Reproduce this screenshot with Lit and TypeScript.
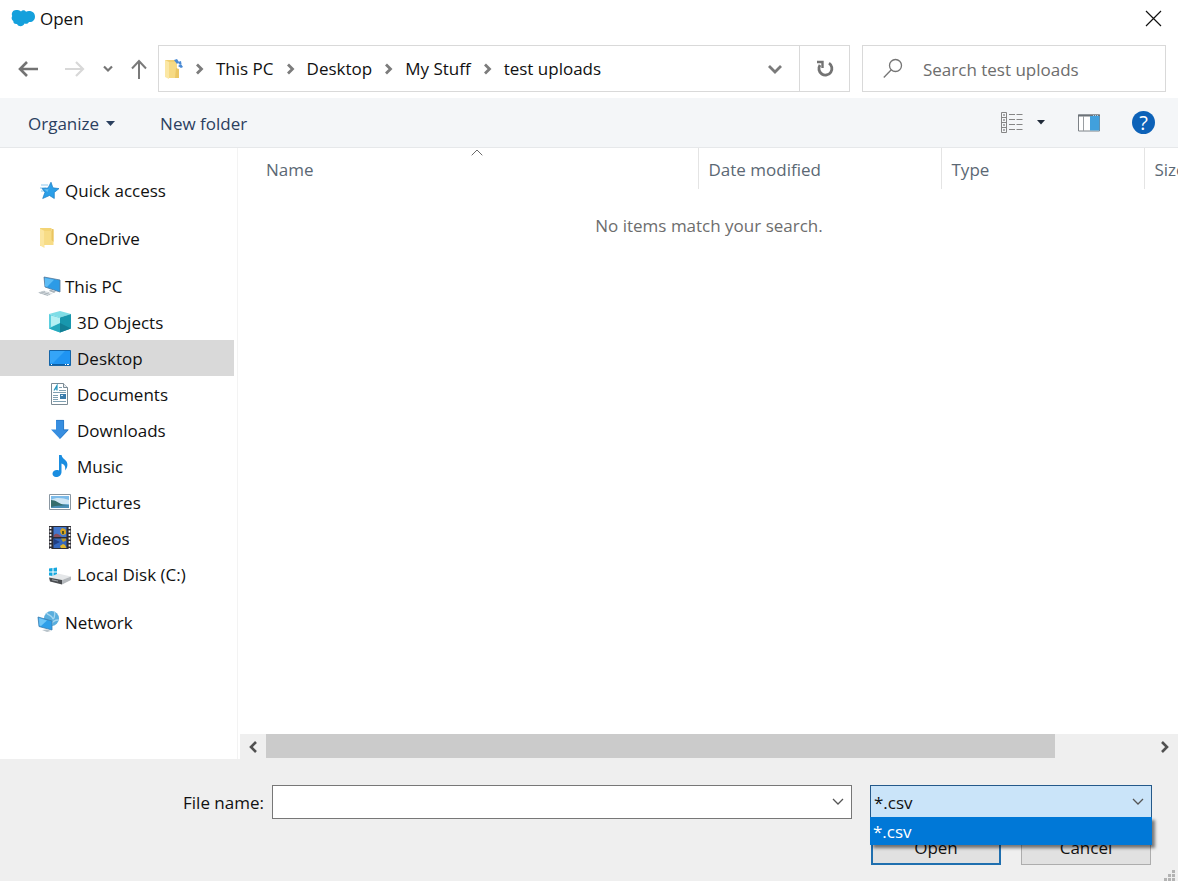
import { LitElement, html, svg, css } from "lit";
import { customElement, property, state } from "lit/decorators.js";
import { classMap } from "lit/directives/class-map.js";

const icons: Record<string, unknown> = {
  star: svg`<path d="M4 7h7M3 10h6M4 13h4" stroke="#8cc8ee" stroke-width="1"/>
    <path d="M14 4.200 15.900 9.800 22 10.600 17.300 14.400 17.300 20.500 12.500 17.500 5.700 20.500 8 14.200 5 10.500 11 10z" fill="#2b9fe8" stroke="#1b7cc4" stroke-width=".7"/>
    <path d="M13.800 6 12 11l-5 .2 3.500 2.800" fill="#62bdf2"/>`,
  folder: svg`<path d="M3 2h11.5v17H6l-3 1z" fill="#f3d475"/><path d="M3 2.5 7.5 5v17L3 19.5z" fill="#fbe6a0"/>
    <path d="M7.5 19V5H15l1.5-1.5V19z" fill="#f7dc86"/><path d="M14.5 3v11l2 2V3z" fill="#e9c460"/>`,
  pc: svg`<path d="M7 3 23 6v12L8 13z" fill="#2c9be6" stroke="#54789a" stroke-width=".8"/><path d="M8 4l9 1.7L10 13l-2-.7z" fill="#5cbcf5"/>
    <path d="M.5 18.5 7 16.500l9 3-5 2.500z" fill="#dfe4e7"/><path d="M2 18.500l9 3M4.500 17.700l8.500 2.900M3 19.200l5-1.800M7 20.500l5-1.800" stroke="#a3adb4" stroke-width=".7"/><path d="M13 15.500l6 2-2 1.500-5-2z" fill="#aab4bb"/>`,
  cube: svg`<path d="M11 1 22 4 11 7.5 0 4z" fill="#7fdde6"/><path d="M0 4l11 3.5v15L0 18.5z" fill="#5ccfdf"/>
    <path d="M11 7.5 22 4v14.500l-11 4z" fill="#1897ad"/><path d="M0 18.500 11 13v9.500z" fill="#27a9bd"/><path d="M2 5.500 11 8v5L2 17z" fill="#b6f0f3"/><path d="M11 13l11 5.500-11 4z" fill="#127f95"/>`,
  desktop: svg`<path d="M.5 4.500h21v15H.5z" fill="#1f94f2" stroke="#1565a8"/><path d="M1 5h15L4 17H1z" fill="#35a5f8"/>
    <path d="M1 18.500h20" stroke="#0d5ea3"/><path d="M2 18.500h1M16 18.500h1M18 18.500h2" stroke="#fff"/>`,
  doc: svg`<path d="M2.500 1.500h12l4 4v17h-16z" fill="#fff" stroke="#7b8a94"/><path d="M14.500 1.500v4h4" fill="#e8eef2" stroke="#7b8a94"/>
    <path d="M5 8.500 8 3.500V8.500M6 7h2" stroke="#2695bd" fill="none" stroke-width="1.200"/>
    <path d="M10 5.500h3M10 8.500h7M4 10.500h13M4 13.500h5M4 15.500h5M4 17.500h5M4 19.500h13" stroke="#7fa0b2"/><path d="M11 12h6v5h-6z" fill="#3a7cab"/><path d="M12 13h2v1h-2z" fill="#cfe6f5"/>`,
  down: svg`<path d="M7 2h8v9.500h5L11 21 2 11.500h5z" fill="#378ee0"/><path d="M7.400 2.400h7.200V12h4.400L11 20.400" fill="none" stroke="#2a77c4" stroke-width=".8"/>`,
  music: svg`<path d="M10 1h2.500c.5 3 3 4 5 6.500 1.500 2.500 1.300 6-1.500 9 .8-3.800-.2-6-3.500-7V18c0 3-2.500 5-5.500 5C5 23 3.500 21.500 3.500 19.700c0-2.200 2-3.700 4.300-3.700.9 0 1.600.1 2.200.5z" fill="#1a8de0"/>`,
  picture: svg`<path d="M.5 4.500h21v15H.5z" fill="#fff" stroke="#8a97a2"/><path d="M2 6h18v12H2z" fill="#7dbbe9"/><path d="M2 10c5-3 12-2 18 0v4H2z" fill="#cfe6f4"/>
    <path d="M2 10c5 0 7 3 12 4.500l6 .5v3H2z" fill="#356d6c"/><path d="M6 16l14-1v3H2v-1z" fill="#4b8fb6"/>`,
  video: svg`<path d="M0 0h22v23H0z" fill="#2c2c34"/><path d="M4.500 1h13v10h-13z" fill="#4377cc"/><path d="M4.500 12.500h13V22h-13z" fill="#3467be"/>
    <path d="M1.500 1v22M20.500 1v22" stroke="#f2f2f2" stroke-width="1.800" stroke-dasharray="2 1.500"/>
    <path d="M11 5l2-3 3 1 1 2v3l-3 1-2-1z" fill="#d9a51d"/><path d="M5 9c3-3 5 0 8 2H5z" fill="#8a4e5c"/><path d="M13 5h2v3h-2z" fill="#4d5221"/>
    <path d="M12 12.500h5v2l-3 1.500z" fill="#b99a28"/><path d="M11 20l3-2 2 1 1.500 3H12z" fill="#e0b52c"/><path d="M5 13l6 3-6 3z" fill="#203f84"/>`,
  disk: svg`<path d="M0 6.500 3.500 6v3.500H0zM4.500 6 8 5.500v4H4.500zM0 10.500h3.500V14L0 13.500zM4.500 10.500H8v4L4.500 14z" fill="#16a7de"/>
    <path d="M9 11.500 22 14.500 13 18 0 15.500z" fill="#e5e7e9"/><path d="M0 15.500 13 18v4.500L1 19.500z" fill="#4a4d51"/><path d="M13 18l9-3.500v3.500l-9 4.500z" fill="#b4b8bc"/><path d="M3 17.800l6 1.300" stroke="#9ea3a7"/>`,
  network: svg`<circle cx="14.500" cy="8.500" r="7.500" fill="#5aaedd"/><path d="M9.500 3c2 2.500 5 2 6 5s3-3 2-6M15 15c-1-3 3-5 6.500-5" fill="none" stroke="#a5d6ef" stroke-width="1.300"/>
    <path d="M1 7l14 4v9L2 16.500z" fill="#2f9fe9" stroke="#3e7eae" stroke-width=".8"/><path d="M2 8l8 2.500L4 16l-1.500-.5z" fill="#6fc6f7"/><path d="M5 20l5-.5 4 1.500-4 1z" fill="#b8c3ca"/>`,
};

interface Place {
  label: string;
  icon: string;
  children?: Place[];
}

const places: Place[] = [
  { label: "Quick access", icon: "star" },
  { label: "OneDrive", icon: "folder" },
  {
    label: "This PC",
    icon: "pc",
    children: [
      { label: "3D Objects", icon: "cube" },
      { label: "Desktop", icon: "desktop" },
      { label: "Documents", icon: "doc" },
      { label: "Downloads", icon: "down" },
      { label: "Music", icon: "music" },
      { label: "Pictures", icon: "picture" },
      { label: "Videos", icon: "video" },
      { label: "Local Disk (C:)", icon: "disk" },
    ],
  },
  { label: "Network", icon: "network" },
];

const base = css`
  * { box-sizing: border-box; }
  button, input, select { font: inherit; color: inherit; margin: 0; padding: 0; border: 0; background: none; border-radius: 0; }
  svg { display: block; flex: none; }
  ul, ol { list-style: none; margin: 0; padding: 0; }
`;

@customElement("nav-bar")
class NavBar extends LitElement {
  static styles = [base, css`
    :host { display: flex; align-items: center; padding: 8px 12px 6px 16px; }
    .history { display: flex; align-items: center; width: 142px; }
    .history button { display: grid; place-items: center; flex: none; width: 16px; height: 32px; }
    .history .back { width: 24px; margin-right: 22px; }
    .history .forward { width: 24px; margin-right: 14px; }
    .history .recent { margin-right: 15px; }
    .address { flex: 1; min-width: 0; display: flex; align-items: center; height: 47px; border: 1px solid #d9d9d9; }
    .folder { margin-left: 5px; }
    .crumbs { flex: 1; display: flex; align-items: center; min-width: 0; }
    .crumbs li { display: flex; align-items: center; white-space: nowrap; }
    .crumbs svg { margin: 0 12px; }
    a { color: #111; text-decoration: none; }
    .drop { width: 48px; height: 45px; display: grid; place-items: center; }
    .refresh { width: 50px; height: 45px; display: grid; place-items: center; border-left: 1px solid #d9d9d9; }
    .search { display: flex; align-items: center; width: 304px; height: 47px; margin-left: 12px; padding-left: 20px; border: 1px solid #d9d9d9; }
    .search input { flex: 1; min-width: 0; margin-left: 20px; padding-top: 2px; outline: 0; }
    .search input::placeholder { color: #6d6d6d; opacity: 1; }
  `];

  render() {
    return html`
      <div class="history">
        <button class="back" aria-label="Back"><svg width="24" height="20" viewBox="0 0 24 20" fill="none" stroke="#737373" stroke-width="2.600"><path d="M22 10H4M11 3 4 10l7 7"/></svg></button>
        <button class="forward" aria-label="Forward"><svg width="24" height="20" viewBox="0 0 24 20" fill="none" stroke="#d8d8d8" stroke-width="2.200"><path d="M3 10h18M14 3l7 7-7 7"/></svg></button>
        <button class="recent" aria-label="Recent locations"><svg width="12" height="8" viewBox="0 0 12 8" fill="none" stroke="#757575" stroke-width="2.200"><path d="M2 1.500 6 5.500l4-4"/></svg></button>
        <button aria-label="Up"><svg width="16" height="20" viewBox="0 0 16 20" fill="none" stroke="#7a7a7a" stroke-width="2"><path d="M8 20V2M1 9.500 8 2l7 7.500"/></svg></button>
      </div>
      <div class="address">
        <svg class="folder" width="19" height="24" viewBox="1 0 19 24"><path d="M2 3h12v18H4z" fill="#f0cf72"/><path d="M2 3l4 2v17l-4-2z" fill="#fbe7a4"/><path d="M6 5h8v16H6z" fill="#f6da84"/><path d="M13 11l3 1v9h-4z" fill="#ebc765"/><path d="M11 3l3-1 2 3-2 2zM15 5l3-1 .5 3-2.500.5zM15 9l3-2 2 3-2 1z" fill="#4a8ad4"/></svg>
        <ol class="crumbs">
          ${["This PC", "Desktop", "My Stuff", "test uploads"].map((c) => html`<li>
            <svg width="9" height="14" viewBox="0 0 9 14" fill="none" stroke="#7c7c7c" stroke-width="2.800"><path d="M2 2.500 6.500 7 2 11.500"/></svg><a href="#">${c}</a></li>`)}
        </ol>
        <button class="drop" aria-label="Previous locations"><svg width="16" height="10" viewBox="0 0 16 10" fill="none" stroke="#7a7a7a" stroke-width="2.800"><path d="M2 2l6 6 6-6"/></svg></button>
        <button class="refresh" aria-label="Refresh"><svg width="20" height="20" viewBox="0 0 20 20" fill="none" stroke="#737373" stroke-width="2.800"><path d="M14 4.200A6.500 6.500 0 1 1 5 6"/><path d="M2 3h5.500v6" stroke-width="2.400"/></svg></button>
      </div>
      <label class="search">
        <svg width="20" height="22" viewBox="0 0 20 22" fill="none" stroke="#757575" stroke-width="1.300"><circle cx="12.500" cy="7.500" r="6"/><path d="M8.300 11.800.8 19.500"/></svg>
        <input type="text" placeholder="Search test uploads" aria-label="Search test uploads">
      </label>`;
  }
}

@customElement("command-bar")
class CommandBar extends LitElement {
  static styles = [base, css`
    :host { display: flex; align-items: center; height: 50px; padding: 0 23px 0 28px; background: #f4f6f8; border-bottom: 1px solid #e6e8ea; color: #2b405f; }
    button { display: flex; align-items: center; height: 32px; }
    .text { padding-top: 2px; }
    .organize { gap: 7px; margin-right: 45px; }
    .spacer { flex: 1; }
    .views { gap: 14px; margin-right: 33px; }
    .pane { margin-right: 31px; }
    .help { justify-content: center; width: 23px; height: 23px; border-radius: 50%; background: #0d62b8; color: #fff; font-size: 20px; }
  `];

  render() {
    return html`
      <button class="text organize">Organize <svg width="9" height="5" viewBox="0 0 9 5"><path d="M0 0h9L4.500 5z" fill="#2b405f"/></svg></button>
      <button class="text">New folder</button>
      <div class="spacer"></div>
      <button class="views" aria-label="Change your view">
        <svg width="22" height="22" viewBox="0 0 22 22" fill="none" stroke="#858585"><path d="M.5.5h5v20h-5zM.5 5.500h5M.5 10.500h5M.5 15.500h5"/><path d="M2.500 3h1M2.500 8h1M2.500 13h1M2.500 18h1" stroke="#333" stroke-width="1.500"/><path d="M8 2.500h6M15.500 2.500h6M8 7.500h6M15.500 7.500h6M8 12.500h6M15.500 12.500h6M8 17.500h6M15.500 17.500h6"/></svg>
        <svg width="8" height="5" viewBox="0 0 8 5"><path d="M0 0h8L4 4.500z" fill="#1f2a38"/></svg>
      </button>
      <button class="pane" aria-label="Show the preview pane"><svg width="23" height="18" viewBox="0 0 23 18"><path d="M.5 1h21v16H.5z" fill="#fff" stroke="#7d8287"/><path d="M0 1.500h22" stroke="#6c7278" stroke-width="2"/><path d="M5.500 2v15" stroke="#9a9ea2"/><path d="M12 2h9.500v14.500H12z" fill="#41a0dd"/><path d="M15 1.500h6" stroke="#a7d3ef" stroke-dasharray="1 1"/></svg></button>
      <button class="help" aria-label="Help">?</button>`;
  }
}

@customElement("place-tree")
class PlaceTree extends LitElement {
  @state() private selected = "Desktop";

  static styles = [base, css`
    :host { display: block; padding: 24px 3px 24px 0; border-right: 1px solid #f3f3f3; }
    .roots { display: grid; gap: 12px; }
    button { display: flex; align-items: center; gap: 4px; width: 100%; height: 36px; padding-left: 37px; color: #111; white-space: nowrap; text-align: left; }
    .child { padding-left: 49px; }
    .selected { background: #d9d9d9; }
    .label { padding-top: 2px; }
  `];

  private item(p: Place, child: boolean) {
    return html`<button class=${classMap({ child, selected: p.label === this.selected })} @click=${() => (this.selected = p.label)}>
      <svg width="24" height="24" viewBox="0 0 24 24" aria-hidden="true">${icons[p.icon]}</svg><span class="label">${p.label}</span></button>`;
  }

  render() {
    return html`<ul class="roots">${places.map((p) => html`<li>${this.item(p, false)}
      ${p.children ? html`<ul>${p.children.map((c) => html`<li>${this.item(c, true)}</li>`)}</ul>` : ""}</li>`)}</ul>`;
  }
}

@customElement("file-list")
class FileList extends LitElement {
  static styles = [base, css`
    :host { display: flex; flex-direction: column; min-width: 0; overflow: hidden; padding-left: 2px; }
    .rows { flex: 1; }
    table { width: 100%; table-layout: fixed; border-collapse: collapse; }
    .date { width: 243px; }
    .type { width: 203px; }
    .size { width: 34px; }
    th { height: 41px; padding: 0 0 0 10px; font-weight: 400; text-align: left; color: #5b6874; border-right: 1px solid #e4e4e4; overflow: hidden; white-space: nowrap; vertical-align: top; }
    th:first-child { padding-left: 16px; }
    th:last-child { border-right: 0; }
    th button { display: grid; grid-template-rows: 10px 24px; width: 100%; text-align: left; line-height: 24px; }
    th svg { justify-self: center; margin-top: 1px; }
    .name { padding-left: 10px; }
    td { padding: 25px 0; line-height: 24px; text-align: center; color: #6d6d6d; }
    .scroll { display: flex; height: 25px; background: #efefef; }
    .scroll button { display: grid; place-items: center; width: 26px; }
    .track { flex: 1; padding-bottom: 1px; }
    .thumb { width: 89%; height: 100%; background: #cbcbcb; }
  `];

  render() {
    return html`
      <div class="rows"><table>
        <colgroup><col><col class="date"><col class="type"><col class="size"></colgroup>
        <thead><tr>
          <th aria-sort="ascending"><button><svg width="12" height="7" viewBox="0 0 12 7" fill="none" stroke="#6a6a6a"><path d="M.7 6.300 6 1l5.300 5.300"/></svg><span class="name">Name</span></button></th>
          <th><button><span></span><span>Date modified</span></button></th>
          <th><button><span></span><span>Type</span></button></th>
          <th><button><span></span><span>Size</span></button></th>
        </tr></thead>
        <tbody><tr><td colspan="4">No items match your search.</td></tr></tbody>
      </table></div>
      <div class="scroll">
        <button aria-label="Scroll left"><svg width="10" height="12" viewBox="0 0 10 12" fill="none" stroke="#505050" stroke-width="2.600"><path d="M8 1 3 6l5 5"/></svg></button>
        <div class="track"><div class="thumb"></div></div>
        <button aria-label="Scroll right"><svg width="10" height="12" viewBox="0 0 10 12" fill="none" stroke="#505050" stroke-width="2.600"><path d="M2 1l5 5-5 5"/></svg></button>
      </div>`;
  }
}

@customElement("file-actions")
class FileActions extends LitElement {
  @property({ type: Array }) types = ["*.csv"];

  static styles = [base, css`
    :host { position: relative; display: grid; grid-template-columns: 264px minmax(0, 1fr) 282px; row-gap: 12px; padding: 26px 26px 16px 0; background: #efefef; color: #111; }
    .label { align-self: center; padding-top: 2px; text-align: right; }
    .name { display: flex; height: 34px; margin: 0 18px 0 8px; background: #fff; border: 1px solid #777; }
    .name input { flex: 1; min-width: 0; padding: 0 4px; outline: 0; }
    .name button { display: grid; place-items: center; width: 26px; }
    .filter { position: relative; height: 34px; }
    select { appearance: none; width: 100%; height: 33px; padding: 2px 3px 0; background: #cae4f9; border: 1px solid #24598a; color: #111; outline: 0; }
    .chevron { position: absolute; right: 8px; top: 13px; pointer-events: none; }
    .menu { position: absolute; z-index: 1; top: 32px; left: 0; right: 0; background: #0078d7; box-shadow: 3px 3px 3px rgba(0, 0, 0, 0.5); color: #fff; }
    .menu li { height: 28px; line-height: 30px; padding-left: 3px; }
    .buttons { grid-column: 3; display: grid; grid-template-columns: 130px 130px; justify-content: space-between; padding: 0 1px; }
    .buttons button { height: 34px; background: #e1e1e1; border: 1px solid #adadad; }
    .buttons .primary { border: 2px solid #1f6faf; }
    .grip { position: absolute; right: 2px; bottom: 0; }
  `];

  render() {
    const chevron = html`<svg width="12" height="8" viewBox="0 0 12 8" fill="none" stroke="#555" stroke-width="1.300"><path d="M1 1l5 5 5-5"/></svg>`;
    return html`
      <label class="label" for="file">File name:</label>
      <div class="name"><input id="file" type="text"><button aria-label="Previous file names">${chevron}</button></div>
      <div class="filter">
        <select aria-label="File type">${this.types.map((t) => html`<option>${t}</option>`)}</select>
        <span class="chevron">${chevron}</span>
        <ul class="menu" role="listbox" aria-label="File types">${this.types.map((t) => html`<li role="option" aria-selected="true">${t}</li>`)}</ul>
      </div>
      <div class="buttons"><button class="primary">Open</button><button>Cancel</button></div>
      <svg class="grip" width="12" height="11" viewBox="0 0 12 11" fill="#b3b3b3"><path d="M8 0h3v3H8zM4 4h3v3H4zM8 4h3v3H8zM0 8h3v3H0zM4 8h3v3H4zM8 8h3v3H8z"/></svg>`;
  }
}

@customElement("app-root")
class AppRoot extends LitElement {
  static styles = [base, css`
    :host { display: flex; flex-direction: column; min-height: 100vh; background: #fff; color: #111; font: 17px/24px "Open Sans", "Noto Sans", sans-serif; }
    .title { display: flex; align-items: center; gap: 5px; height: 37px; padding: 0 16px 0 11px; }
    .title span { flex: 1; }
    .body { flex: 1; display: grid; grid-template-columns: 238px minmax(0, 1fr); }
  `];

  render() {
    return html`
      <header class="title">
        <svg width="24" height="20" viewBox="0 0 24 20"><path d="M10 2.500C11.200 1 13.500.8 15 2.700c3-1.500 9-.5 9 5 0 3.500-3 6-6 5.300-1 1.800-3 2.200-4.500 1.500C12 18 7.500 18 6 15c-2.500.3-3.800-1-3.700-3C.500 11 .2 8.500 1.200 7 0 4 2 1 5 1c2 0 3.800.3 5 1.500z" fill="#14a0dc"/></svg>
        <span>Open</span>
        <button aria-label="Close"><svg width="17" height="18" viewBox="0 0 17 18" stroke="#111" stroke-width="1.200"><path d="M1 1l15 15M16 1 1 16"/></svg></button>
      </header>
      <nav-bar></nav-bar>
      <command-bar></command-bar>
      <main class="body"><place-tree></place-tree><file-list></file-list></main>
      <file-actions></file-actions>`;
  }
}
